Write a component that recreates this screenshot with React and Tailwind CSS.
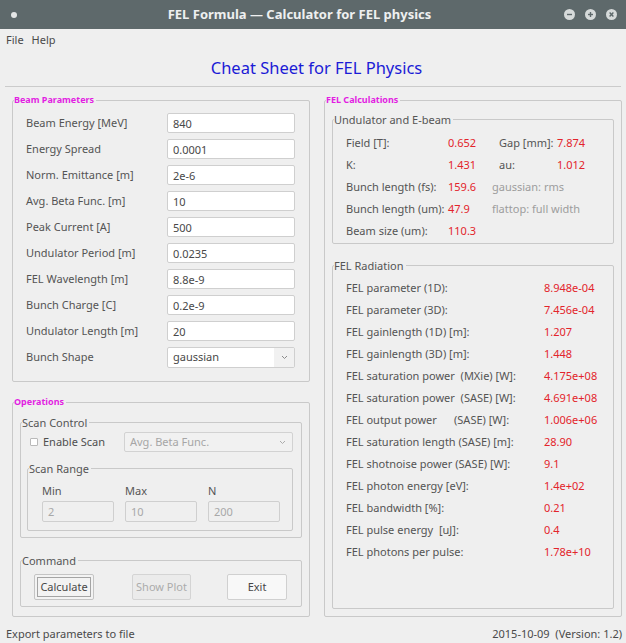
import React from "react";

const beamRows = [
  ["Beam Energy [MeV]", "840"],
  ["Energy Spread", "0.0001"],
  ["Norm. Emittance [m]", "2e-6"],
  ["Avg. Beta Func. [m]", "10"],
  ["Peak Current [A]", "500"],
  ["Undulator Period [m]", "0.0235"],
  ["FEL Wavelength [m]", "8.8e-9"],
  ["Bunch Charge [C]", "0.2e-9"],
  ["Undulator Length [m]", "20"],
];

const radiationRows = [
  ["FEL parameter (1D):", "8.948e-04"],
  ["FEL parameter (3D):", "7.456e-04"],
  ["FEL gainlength (1D) [m]:", "1.207"],
  ["FEL gainlength (3D) [m]:", "1.448"],
  ["FEL saturation power\u00a0 (MXie) [W]:", "4.175e+08"],
  ["FEL saturation power\u00a0 (SASE) [W]:", "4.691e+08"],
  ["FEL output power\u00a0\u00a0\u00a0\u00a0\u00a0 (SASE) [W]:", "1.006e+06"],
  ["FEL saturation length (SASE) [m]:", "28.90"],
  ["FEL shotnoise power (SASE) [W]:", "9.1"],
  ["FEL photon energy [eV]:", "1.4e+02"],
  ["FEL bandwidth [%]:", "0.21"],
  ["FEL pulse energy\u00a0 [uJ]:", "0.4"],
  ["FEL photons per pulse:", "1.78e+10"],
];

function Chevron({ color = "#8a8a8a" }) {
  return (
    <svg width="7" height="5" viewBox="0 0 7 5">
      <polyline points="1,1 3.5,3.5 6,1" fill="none" stroke={color} strokeWidth="1" />
    </svg>
  );
}

function TitleButton({ kind }) {
  return (
    <svg width="11" height="11" viewBox="0 0 11 11">
      <circle cx="5.5" cy="5.5" r="5.5" fill="#d6dada" />
      {kind === "min" && <line x1="3" y1="5.5" x2="8" y2="5.5" stroke="#5d686a" strokeWidth="1.4" />}
      {kind === "max" && (
        <g stroke="#5d686a" strokeWidth="1.4">
          <line x1="3" y1="5.5" x2="8" y2="5.5" />
          <line x1="5.5" y1="3" x2="5.5" y2="8" />
        </g>
      )}
      {kind === "close" && (
        <g stroke="#5d686a" strokeWidth="1.4">
          <line x1="3.6" y1="3.6" x2="7.4" y2="7.4" />
          <line x1="7.4" y1="3.6" x2="3.6" y2="7.4" />
        </g>
      )}
    </svg>
  );
}

function TextBox({ value, disabled, width = "w-[128px]", height = "h-[20px]" }) {
  return (
    <input
      readOnly
      value={value}
      disabled={disabled}
      className={`${width} ${height} rounded-[2px] border border-[#cfcfcf] pl-[5px] text-[11px] outline-none ${
        disabled ? "bg-[#efefef] text-[#a8a8a8]" : "bg-white text-[#484848]"
      }`}
    />
  );
}

function GroupTitle({ children }) {
  return (
    <legend className="ml-[1px] p-0 pr-[2px] text-[9px] leading-[10px] font-bold text-[#e21ee2]">{children}</legend>
  );
}

function SubTitle({ children }) {
  return <legend className="ml-[1px] p-0 pr-[2px] text-[11px] leading-[15px] text-[#555]">{children}</legend>;
}

export default function App() {
  return (
    <div className="w-[626px] h-[643px] bg-[#efefef] flex flex-col overflow-hidden font-['Noto_Sans',sans-serif] text-[11px] text-[#545454]">
      {/* window title bar */}
      <div className="h-[29px] shrink-0 bg-[#5e696b] flex items-center pl-[11px] pr-[9px]">
        <span className="w-[6px] h-[6px] rounded-full bg-[#e4e6e6]" />
        <div className="flex-1 text-center text-[13px] font-bold text-[#eef0f0] pl-[18px]">
          FEL Formula — Calculator for FEL physics
        </div>
        <div className="flex items-center gap-[10px]">
          <TitleButton kind="min" />
          <TitleButton kind="max" />
          <TitleButton kind="close" />
        </div>
      </div>

      {/* menu bar */}
      <div className="h-[22px] shrink-0 flex items-center gap-[8px] px-[6px] text-[11px] text-[#4a4a4a]">
        <span>File</span>
        <span>Help</span>
      </div>

      {/* heading */}
      <div className="h-[35px] shrink-0 flex items-center justify-center pl-[7px] text-[16.5px] text-[#1b1bd6]">
        Cheat Sheet for FEL Physics
      </div>
      <div className="mx-[5px] h-px shrink-0 bg-[#cbcbcb]" />

      {/* main panels */}
      <div className="flex-1 flex gap-[14px] pl-[12px] pt-[8px] pb-[5px] min-h-0">
        {/* left column */}
        <div className="w-[298px] flex flex-col">
          <fieldset className="border border-[#c9c9c9] rounded-[2px]">
            <GroupTitle>Beam Parameters</GroupTitle>
            <div className="flex flex-col gap-[6px] pt-[8px] pb-[13px] pl-[13px] pr-[14px]">
              {beamRows.map(([label, value]) => (
                <div key={label} className="flex items-center h-[20px]">
                  <span className="w-[141px]">{label}</span>
                  <TextBox value={value} />
                </div>
              ))}
              <div className="flex items-center h-[21px]">
                <span className="w-[141px]">Bunch Shape</span>
                <div className="w-[128px] h-[21px] rounded-[2px] border border-[#cfcfcf] bg-white flex items-stretch overflow-hidden">
                  <span className="flex-1 pl-[5px] flex items-center text-[#484848]">gaussian</span>
                  <span className="w-[20px] bg-[#f1f1f1] flex items-center justify-center">
                    <Chevron />
                  </span>
                </div>
              </div>
            </div>
          </fieldset>

          <fieldset className="mt-[15px] flex-1 flex flex-col border border-[#c9c9c9] rounded-[2px]">
            <GroupTitle>Operations</GroupTitle>
            <div className="flex flex-col pt-[8px] px-[7px] pb-[7px]">
              <fieldset className="border border-[#c9c9c9] rounded-[2px]">
                <SubTitle>Scan Control</SubTitle>
                <div className="pt-[2px] pb-[6px] pl-[9px] pr-[8px]">
                  <div className="flex items-center h-[20px]">
                    <span className="w-[8px] h-[8px] border border-[#b9b9b9] bg-white rounded-[1px]" />
                    <span className="ml-[5px] text-[#4e4e4e]">Enable Scan</span>
                    <div className="ml-auto w-[169px] h-[20px] rounded-[2px] border border-[#d2d2d2] bg-[#f1f1f1] flex items-stretch">
                      <span className="flex-1 pl-[5px] flex items-center text-[#a6a6a6]">Avg. Beta Func.</span>
                      <span className="w-[20px] flex items-center justify-center">
                        <Chevron color="#acacac" />
                      </span>
                    </div>
                  </div>

                  <fieldset className="mt-[9px] ml-[-3px] border border-[#c9c9c9] rounded-[2px]">
                    <SubTitle>Scan Range</SubTitle>
                    <div className="grid grid-cols-[72px_72px_72px] gap-x-[11px] pt-[7px] pb-[8px] pl-[14px]">
                      <span className="leading-[15px] text-[#555]">Min</span>
                      <span className="leading-[15px] text-[#555]">Max</span>
                      <span className="leading-[15px] text-[#555]">N</span>
                      <div className="mt-[3px]"><TextBox value="2" disabled width="w-[72px]" height="h-[21px]" /></div>
                      <div className="mt-[3px]"><TextBox value="10" disabled width="w-[72px]" height="h-[21px]" /></div>
                      <div className="mt-[3px]"><TextBox value="200" disabled width="w-[72px]" height="h-[21px]" /></div>
                    </div>
                  </fieldset>
                </div>
              </fieldset>

              <fieldset className="mt-[15px] border border-[#c9c9c9] rounded-[2px]">
                <SubTitle>Command</SubTitle>
                <div className="flex items-center pt-[6px] pb-[6px] pl-[13px]">
                  <button className="w-[60px] h-[26px] rounded-[2px] border border-[#c4c4c4] bg-[#f3f3f3] p-[2px]">
                    <span className="w-full h-full border border-[#a4a4a4] flex items-center justify-center text-[11px] text-[#474747]">
                      Calculate
                    </span>
                  </button>
                  <button className="ml-[38px] w-[59px] h-[26px] rounded-[2px] border border-[#d4d4d4] bg-[#ebebeb] text-[11px] text-[#ababab]">
                    Show Plot
                  </button>
                  <button className="ml-[36px] w-[60px] h-[26px] rounded-[2px] border border-[#d0d0d0] bg-[#f8f8f8] text-[11px] text-[#474747]">
                    Exit
                  </button>
                </div>
              </fieldset>
            </div>
          </fieldset>
        </div>

        {/* right column */}
        <fieldset className="w-[298px] flex flex-col border border-[#c9c9c9] rounded-[2px]">
          <GroupTitle>FEL Calculations</GroupTitle>
          <div className="flex-1 flex flex-col pt-[7px] px-[7px] pb-[7px]">
            <fieldset className="border border-[#c9c9c9] rounded-[2px]">
              <SubTitle>Undulator and E-beam</SubTitle>
              <div className="grid grid-cols-[102px_44px_7px_58px_1fr] auto-rows-[22px] items-center pt-[5px] pb-[1px] pl-[13px]">
                <span>Field [T]:</span>
                <span className="text-[#e3242b]">0.652</span>
                <span className="col-span-2 pl-[7px]">Gap [mm]:</span>
                <span className="text-[#e3242b]">7.874</span>

                <span>K:</span>
                <span className="text-[#e3242b]">1.431</span>
                <span className="col-span-2 pl-[7px]">au:</span>
                <span className="text-[#e3242b]">1.012</span>

                <span>Bunch length (fs):</span>
                <span className="text-[#e3242b]">159.6</span>
                <span className="col-span-3 text-[#9d9d9d]">gaussian: rms</span>

                <span>Bunch length (um):</span>
                <span className="text-[#e3242b]">47.9</span>
                <span className="col-span-3 text-[#9d9d9d]">flattop: full width</span>

                <span>Beam size (um):</span>
                <span className="text-[#e3242b]">110.3</span>
                <span className="col-span-3" />
              </div>
            </fieldset>

            <fieldset className="mt-[14px] flex-1 border border-[#c9c9c9] rounded-[2px]">
              <SubTitle>FEL Radiation</SubTitle>
              <div className="flex flex-col pt-[4px] pl-[13px]">
                {radiationRows.map(([label, value]) => (
                  <div key={label} className="h-[22px] flex items-center">
                    <span className="w-[198px] whitespace-pre">{label}</span>
                    <span className="text-[#e3242b]">{value}</span>
                  </div>
                ))}
              </div>
            </fieldset>
          </div>
        </fieldset>
      </div>

      {/* status bar */}
      <div className="h-[21px] shrink-0 flex items-center justify-between pt-[3px] pl-[6px] pr-[4px] text-[11px] text-[#4a4a4a]">
        <span>Export parameters to file</span>
        <span>2015-10-09&nbsp; (Version: 1.2)</span>
      </div>
    </div>
  );
}
